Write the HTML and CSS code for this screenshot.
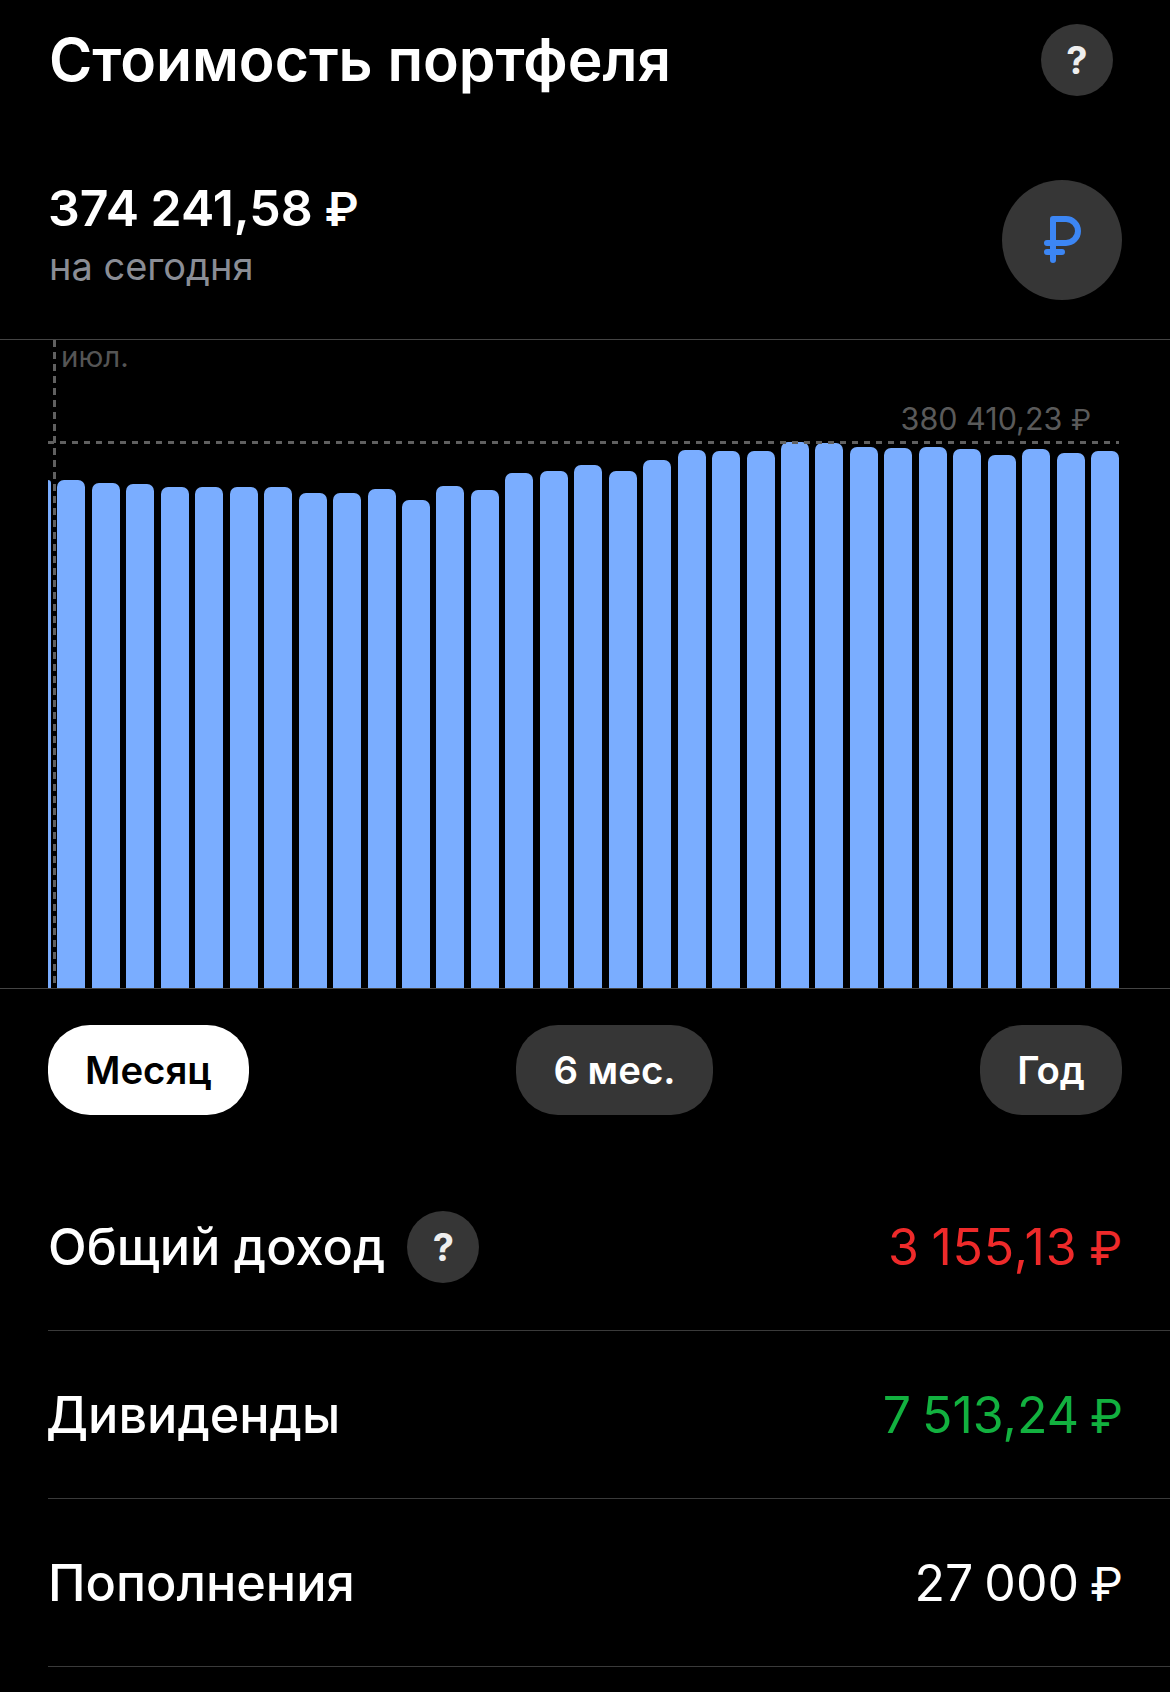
FILE: index.html
```html
<!DOCTYPE html>
<html lang="ru">
<head>
    <meta charset="UTF-8">
    <title>Стоимость портфеля</title>
    <link rel="stylesheet" href="styles.css">
</head>
<body>
    <div class="head">
        <h1>Стоимость портфеля</h1>
        <span class="help">?</span>
    </div>
    <div class="total">
        <div>
            <div class="amount">374 241,58 <span class="rub">₽</span></div>
            <div class="today">на сегодня</div>
        </div>
        <div class="currency">
            <svg width="120" height="120" viewBox="0 0 120 120">
                <path d="M51 80V39H64A12 12 0 0 1 64 63H45M45 72H60" fill="none" stroke="#3c86f4" stroke-width="6" stroke-linecap="round" stroke-linejoin="round"/>
            </svg>
        </div>
    </div>
    <div class="chart">
        <div class="bars">
            <div class="bar first" style="height:508px"></div>
            <div class="bar" style="height:508px"></div>
            <div class="bar" style="height:505px"></div>
            <div class="bar" style="height:504px"></div>
            <div class="bar" style="height:501px"></div>
            <div class="bar" style="height:501px"></div>
            <div class="bar" style="height:501px"></div>
            <div class="bar" style="height:501px"></div>
            <div class="bar" style="height:495px"></div>
            <div class="bar" style="height:495px"></div>
            <div class="bar" style="height:499px"></div>
            <div class="bar" style="height:488px"></div>
            <div class="bar" style="height:502px"></div>
            <div class="bar" style="height:498px"></div>
            <div class="bar" style="height:515px"></div>
            <div class="bar" style="height:517px"></div>
            <div class="bar" style="height:523px"></div>
            <div class="bar" style="height:517px"></div>
            <div class="bar" style="height:528px"></div>
            <div class="bar" style="height:538px"></div>
            <div class="bar" style="height:537px"></div>
            <div class="bar" style="height:537px"></div>
            <div class="bar" style="height:546px"></div>
            <div class="bar" style="height:545px"></div>
            <div class="bar" style="height:541px"></div>
            <div class="bar" style="height:540px"></div>
            <div class="bar" style="height:541px"></div>
            <div class="bar" style="height:539px"></div>
            <div class="bar" style="height:533px"></div>
            <div class="bar" style="height:539px"></div>
            <div class="bar" style="height:535px"></div>
            <div class="bar" style="height:537px"></div>
        </div>
        <div class="line-v"></div>
        <div class="line-h"></div>
        <span class="month">июл.</span>
        <span class="max">380 410,23 <span class="rub">₽</span></span>
    </div>
    <div class="periods">
        <button class="period active">Месяц</button>
        <button class="period">6 мес.</button>
        <button class="period">Год</button>
    </div>
    <div class="rows">
        <div class="row">
            <div class="label">Общий доход <span class="help">?</span></div>
            <div class="value red">3 155,13 <span class="rub">₽</span></div>
        </div>
        <div class="row">
            <div class="label flush">Дивиденды</div>
            <div class="value green">7 513,24 <span class="rub">₽</span></div>
        </div>
        <div class="row">
            <div class="label">Пополнения</div>
            <div class="value">27 000 <span class="rub">₽</span></div>
        </div>
    </div>
</body>
</html>
```

FILE: styles.css
```css
body {
    margin: 0;
    background: #000;
    color: #fff;
    font-family: Inter, "Liberation Sans", sans-serif;
    overflow: hidden;
}
.rub {
    font-size: 0.94em;
}
.head {
    height: 118px;
    padding: 0 57px 2px 49px;
    display: flex;
    justify-content: space-between;
    align-items: center;
}
h1 {
    margin: 0;
    font-size: 58.8px;
    font-weight: 600;
}
.head .help {
    margin-top: 2px;
}
.help {
    width: 72px;
    height: 72px;
    border-radius: 50%;
    background: #363636;
    color: #eee;
    font-size: 38px;
    font-weight: 700;
    display: inline-flex;
    justify-content: center;
    align-items: center;
}
.total {
    height: 219px;
    padding: 0 48px;
    border-bottom: 1px solid #444;
    display: flex;
    justify-content: space-between;
    align-items: flex-start;
}
.amount {
    margin-top: 58px;
    font-size: 50px;
    line-height: 60px;
    font-weight: 600;
    word-spacing: -1px;
}
.today {
    margin-top: 2px;
    margin-left: 1px;
    font-size: 38px;
    line-height: 50px;
    color: #8a8d95;
}
.currency {
    margin-top: 60px;
    width: 120px;
    height: 120px;
    border-radius: 50%;
    background: #363636;
}
.chart {
    position: relative;
    height: 648px;
    border-bottom: 1px solid #444;
}
.bars {
    height: 100%;
    padding-left: 48px;
    display: flex;
    align-items: flex-end;
    gap: 6.46px;
}
.bar {
    width: 28px;
    background: #7aadff;
    border-radius: 7px 7px 0 0;
}
.bar.first {
    width: 3px;
    border-radius: 0 4px 0 0;
}
.line-v {
    position: absolute;
    left: 53px;
    top: 0;
    bottom: 0;
    width: 3px;
    background: repeating-linear-gradient(to bottom, #606060 0 7px, transparent 7px 12px);
}
.line-h {
    position: absolute;
    left: 48px;
    top: 101px;
    width: 1071px;
    height: 3px;
    background: repeating-linear-gradient(to right, #606060 0 6px, transparent 6px 12px);
}
.month {
    position: absolute;
    left: 61px;
    top: -2px;
    font-size: 29.5px;
    line-height: 36px;
    color: #555;
}
.max {
    position: absolute;
    right: 79px;
    top: 61px;
    font-size: 30.5px;
    line-height: 36px;
    color: #5a5a5a;
}
.periods {
    padding: 36px 48px 48px;
    display: flex;
    justify-content: space-between;
}
.period {
    height: 90px;
    padding: 0 37px;
    border: 0;
    border-radius: 42px;
    background: #363636;
    color: #fff;
    font-family: inherit;
    font-size: 38.4px;
    font-weight: 600;
}
.period.active {
    background: #fff;
    color: #000;
}
.row {
    height: 167px;
    margin-left: 48px;
    padding-right: 47px;
    border-bottom: 1px solid #3a3a3a;
    display: flex;
    justify-content: space-between;
    align-items: center;
}
.label {
    font-size: 50.4px;
    font-weight: 500;
    display: flex;
    align-items: center;
    gap: 22px;
}
.label.flush {
    margin-left: -2px;
}
.value {
    font-size: 50px;
    word-spacing: -3px;
}
.red {
    color: #ee2a2a;
    letter-spacing: 0.8px;
}
.green {
    color: #12b13f;
}
```
